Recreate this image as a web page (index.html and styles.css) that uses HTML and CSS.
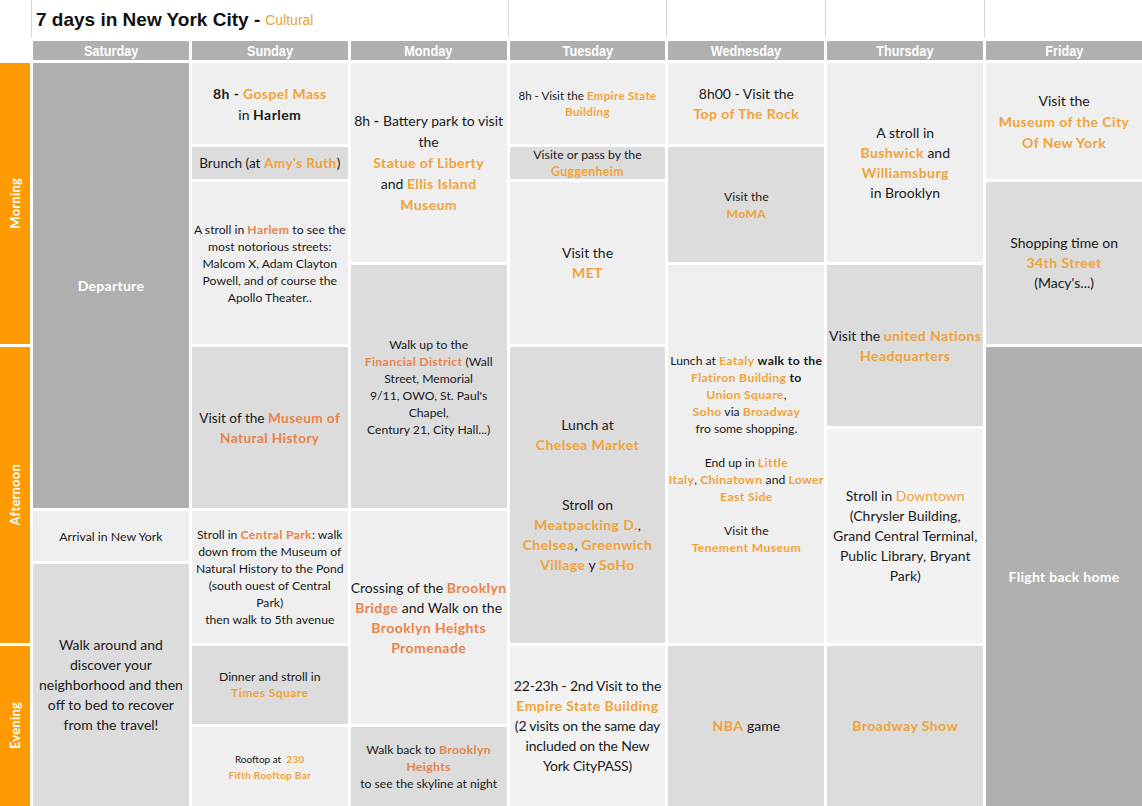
FILE: index.html
```html
<!DOCTYPE html>
<html>
<head>
<meta charset="utf-8">
<link rel="stylesheet" href="styles.css">
</head>
<body>
<div class="plan">
  <div class="top top-title c2 w3"><span class="title">7 days in New York City -</span> <span class="subtitle">Cultural</span></div>
  <div class="top c5"></div>
  <div class="top c6"></div>
  <div class="top c7"></div>
  <div class="top c8"></div>

  <div class="day c2"><span>Saturday</span></div>
  <div class="day c3"><span>Sunday</span></div>
  <div class="day c4"><span>Monday</span></div>
  <div class="day c5"><span>Tuesday</span></div>
  <div class="day c6"><span>Wednesday</span></div>
  <div class="day c7"><span>Thursday</span></div>
  <div class="day c8"><span>Friday</span></div>

  <div class="period c1 r1 s4"><span>Morning</span></div>
  <div class="period c1 r5 s4"><span>Afternoon</span></div>
  <div class="period c1 r9 s2"><span>Evening</span></div>

  <!-- Saturday -->
  <div class="cell dark c2 r1 s6 f14"><p><b>Departure</b></p></div>
  <div class="cell light c2 r7 s1 f12"><p>Arrival in New York</p></div>
  <div class="cell mid c2 r8 s3 f14"><p>Walk around and<br>discover your<br>neighborhood and then<br>off to bed to recover<br>from the travel!</p></div>

  <!-- Sunday -->
  <div class="cell light c3 r1 s1 f14 lh21"><p><b>8h -</b> <b class="o">Gospel Mass</b><br>in <b>Harlem</b></p></div>
  <div class="cell mid c3 r2 s1 f135"><p>Brunch (at <b class="o">Amy's Ruth</b>)</p></div>
  <div class="cell light c3 r3 s2 f11"><p>A stroll in <b class="ro">Harlem</b> to see the<br>most notorious streets:<br>Malcom X, Adam Clayton<br>Powell, and of course the<br>Apollo Theater..</p></div>
  <div class="cell mid c3 r5 s2 f135"><p>Visit of the <b class="ro">Museum of</b><br><b class="ro">Natural History</b></p></div>
  <div class="cell light c3 r7 s2 f11"><p>Stroll in <b class="ro">Central Park</b>: walk<br>down from the Museum of<br>Natural History to the Pond<br>(south ouest of Central<br>Park)<br>then walk to 5th avenue</p></div>
  <div class="cell mid c3 r9 s1 f11 lh16"><p>Dinner and stroll in<br><b class="o">Times Square</b></p></div>
  <div class="cell light c3 r10 s1 f10"><p>Rooftop at&nbsp; <b class="o">230<br>Fifth Rooftop Bar</b></p></div>

  <!-- Monday -->
  <div class="cell light c4 r1 s3 f14 lh21"><p>8h <b>-</b> Battery park to visit<br>the<br><b class="o">Statue of Liberty</b><br>and <b class="o">Ellis Island</b><br><b class="o">Museum</b></p></div>
  <div class="cell mid c4 r4 s3 f11"><p>Walk up to the<br><b class="ro">Financial District</b> (Wall<br>Street, Memorial<br>9/11, OWO, St. Paul's<br>Chapel,<br>Century 21, City Hall...)</p></div>
  <div class="cell light c4 r7 s3 f14"><p>Crossing of the <b class="ro">Brooklyn</b><br><b class="ro">Bridge</b> and Walk on the<br><b class="ro">Brooklyn Heights</b><br><b class="ro">Promenade</b></p></div>
  <div class="cell mid c4 r10 s1 f11"><p>Walk back to <b class="ro">Brooklyn</b><br><b class="ro">Heights</b><br>to see the skyline at night</p></div>

  <!-- Tuesday -->
  <div class="cell light c5 r1 s1 f115 lh16"><p>8h - Visit the <b class="o">Empire State</b><br><b class="o">Building</b></p></div>
  <div class="cell mid c5 r2 s1 f12 lh17"><p>Visite or pass by the<br><b class="o">Guggenheim</b></p></div>
  <div class="cell light c5 r3 s2 f14"><p>Visit the<br><b class="o">MET</b></p></div>
  <div class="cell mid c5 r5 s4 f14"><p>Lunch at<br><b class="o">Chelsea Market</b><br><br><br>Stroll on<br><b class="o">Meatpacking D.</b>,<br><b class="o">Chelsea</b>, <b class="o">Greenwich</b><br><b class="o">Village</b> y <b class="o">SoHo</b></p></div>
  <div class="cell pale c5 r9 s2 f14 narrow"><p>22-23h - 2nd Visit to the<br><b class="o">Empire State Building</b><br>(2 visits on the same day<br>included on the New<br>York CityPASS)</p></div>

  <!-- Wednesday -->
  <div class="cell light c6 r1 s1 f14"><p>8h00 - Visit the<br><b class="o">Top of The Rock</b></p></div>
  <div class="cell mid c6 r2 s2 f11"><p>Visit the<br><b class="o">MoMA</b></p></div>
  <div class="cell light c6 r4 s5 f11"><p>Lunch at <b class="o">Eataly</b> <b>walk to the</b><br><b class="o">Flatiron Building</b> <b>to</b><br><b class="o">Union Square</b>,<br><b class="o">Soho</b> via <b class="o">Broadway</b><br>fro some shopping.<br><br>End up in <b class="o">Little</b><br><b class="o">Italy</b>, <b class="o">Chinatown</b> and <b class="o">Lower</b><br><b class="o">East Side</b><br><br>Visit the<br><b class="o">Tenement Museum</b></p></div>
  <div class="cell mid c6 r9 s2 f14"><p><b class="o">NBA</b> game</p></div>

  <!-- Thursday -->
  <div class="cell light c7 r1 s3 f14"><p>A stroll in<br><b class="o">Bushwick</b> and<br><b class="o">Williamsburg</b><br>in Brooklyn</p></div>
  <div class="cell mid c7 r4 s2 f14"><p>Visit the <b class="o">united Nations</b><br><b class="o">Headquarters</b></p></div>
  <div class="cell pale c7 r6 s3 f14"><p>Stroll in <span class="o">Downtown</span><br>(Chrysler Building,<br>Grand Central Terminal,<br>Public Library, Bryant<br>Park)</p></div>
  <div class="cell mid c7 r9 s2 f14"><p><b class="o">Broadway Show</b></p></div>

  <!-- Friday -->
  <div class="cell light c8 r1 s2 f14 lh21"><p>Visit the<br><b class="o">Museum of the City</b><br><b class="o">Of New York</b></p></div>
  <div class="cell mid c8 r3 s2 f14"><p>Shopping time on<br><b class="o">34th Street</b><br>(Macy's...)</p></div>
  <div class="cell dark c8 r5 s6 f14"><p><b>Flight back home</b></p></div>
</div>
</body>
</html>
```
FILE: styles.css
```css
html, body {
  margin: 0;
  padding: 0;
  background: #ffffff;
}

.plan {
  display: grid;
  width: 1142px;
  height: 806px;
  overflow: hidden;
  grid-template-columns: 30px repeat(7, 1fr);
  grid-template-rows: 38px 19px 81px 32px 80px 79px 79px 79px 50px 79px 78px 79px;
  column-gap: 3px;
  row-gap: 3px;
  font-family: Lato, "Open Sans", sans-serif;
  color: #1a1a1a;
}

.top {
  grid-row: 1;
  border-left: 1px solid #d6d6d6;
  margin-left: -2px;
  margin-bottom: 1px;
}

.top-title {
  display: flex;
  align-items: center;
  padding-left: 4px;
  padding-top: 2px;
  white-space: nowrap;
}

.title {
  font-family: "Liberation Sans", Arial, sans-serif;
  font-weight: bold;
  font-size: 19px;
  color: #111;
}

.subtitle {
  font-family: "Liberation Sans", Arial, sans-serif;
  font-size: 14px;
  color: #e9a23b;
  margin-left: 5px;
}

.day {
  grid-row: 2;
  background: #b0b0b0;
  color: #ffffff;
  font-family: "Liberation Sans", Arial, sans-serif;
  font-weight: bold;
  font-size: 15.5px;
  display: flex;
  align-items: center;
  justify-content: center;
  line-height: 1;
}

.day span {
  display: inline-block;
  transform: scaleX(0.82);
}

.period {
  background: #ff9a00;
  color: #ffffff;
  font-weight: bold;
  font-size: 13px;
  display: flex;
  align-items: center;
  justify-content: center;
}

.period span {
  writing-mode: vertical-rl;
  transform: rotate(180deg);
  letter-spacing: 0.2px;
}

.cell {
  display: flex;
  align-items: center;
  justify-content: center;
  text-align: center;
  padding: 0 1px;
  box-sizing: border-box;
  overflow: hidden;
}

.cell p {
  margin: 0;
  white-space: nowrap;
}

.cell b {
  letter-spacing: 0.03em;
}

.light { background: #efefef; }
.pale { background: #f2f2f2; }
.mid { background: #dcdcdc; }
.dark { background: #b0b0b0; color: #ffffff; }

.o { color: #efa33a; }
.ro { color: #e8834a; }
.dark b { color: #ffffff; letter-spacing: 0.02em; }

.f10 { font-size: 10px; line-height: 16px; }
.f11 { font-size: 12.2px; line-height: 17px; }
.f115 { font-size: 11.6px; }
.f12 { font-size: 12.3px; }
.f135 { font-size: 13.6px; line-height: 20px; }
.f14 { font-size: 14px; line-height: 20px; }
.lh16 { line-height: 16px; }
.lh17 { line-height: 17px; }
.lh21 { line-height: 21px; }
.narrow { letter-spacing: -0.2px; }

/* columns */
.c1 { grid-column: 1; }
.c2 { grid-column: 2; }
.c3 { grid-column: 3; }
.c4 { grid-column: 4; }
.c5 { grid-column: 5; }
.c6 { grid-column: 6; }
.c7 { grid-column: 7; }
.c8 { grid-column: 8; }
.w3 { grid-column: 2 / span 3; }

/* row starts (data rows begin at grid line 3) */
.r1 { grid-row-start: 3; }
.r2 { grid-row-start: 4; }
.r3 { grid-row-start: 5; }
.r4 { grid-row-start: 6; }
.r5 { grid-row-start: 7; }
.r6 { grid-row-start: 8; }
.r7 { grid-row-start: 9; }
.r8 { grid-row-start: 10; }
.r9 { grid-row-start: 11; }
.r10 { grid-row-start: 12; }

/* row spans */
.s1 { grid-row-end: span 1; }
.s2 { grid-row-end: span 2; }
.s3 { grid-row-end: span 3; }
.s4 { grid-row-end: span 4; }
.s5 { grid-row-end: span 5; }
.s6 { grid-row-end: span 6; }
```
